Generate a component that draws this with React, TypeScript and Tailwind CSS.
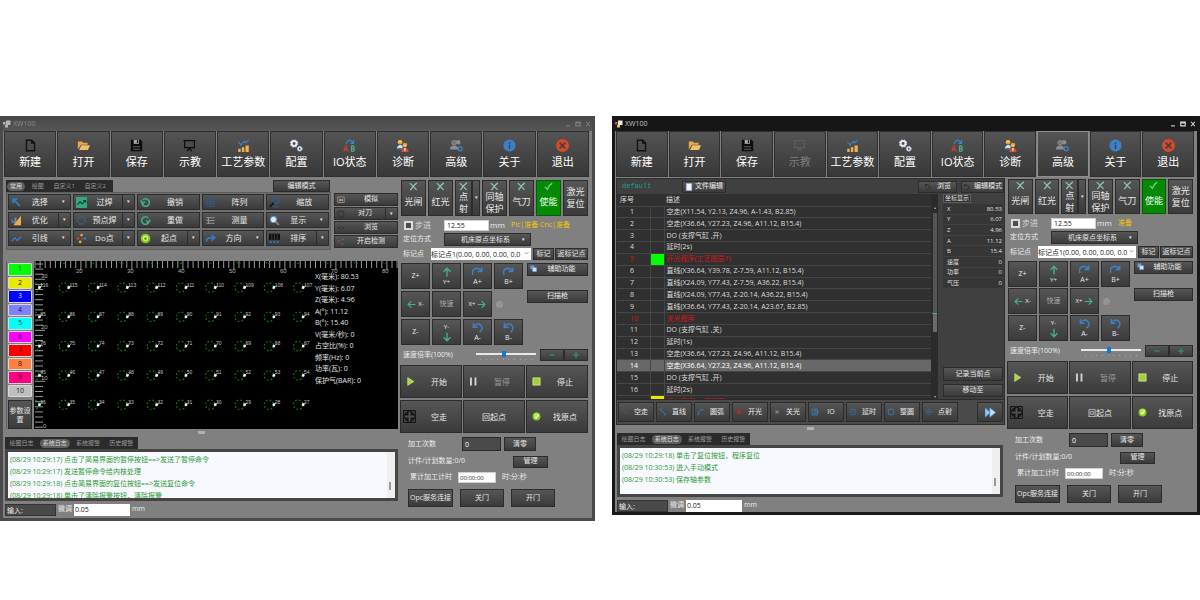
import type { ReactNode } from "react";
import { clsx } from "clsx";

const FACE =
  "bg-gradient-to-b from-[#565656] to-[#3b3b3b] border border-[#2c2c2c] text-[#e8e8e8]";

const icons: Record<string, ReactNode> = {
  file: <path d="M3 1.5h6.5L13 5v9.5H3zM9.5 1.5V5H13" fill="none" stroke="#111" strokeWidth="1.7" />,
  folder: (
    <>
      <path d="M1 13V3h5l1.500 1.500H13V7H5z" fill="#e9a94a" />
      <path d="M5.500 7.800H16L13.500 13.500H2.500z" fill="#f5bd6a" />
    </>
  ),
  save: (
    <>
      <path d="M1 1h12l2 2v12H1z" fill="#0c0c0c" />
      <path d="M4.500 1h6.500v5H4.500z" fill="#a5a5a5" />
      <path d="M8.500 1.500h1.500v3.500H8.500z" fill="#0c0c0c" />
      <path d="M3.500 9h9v1.200h-9zM3.500 12h9v1.200h-9z" fill="#5c5c5c" />
    </>
  ),
  board: (
    <path d="M0.500 2h15M2 2v8.500h12V2M8 10.500v2M8 11.500L5 15M8 11.500l3 3.500" fill="none" stroke="currentColor" strokeWidth="1.5" />
  ),
  chart: (
    <>
      <path d="M1.500 12h3v4h-3zM6 10h3v6H6zM10.500 8h4v8h-4z" fill="#f2b14c" />
      <path d="M1.500 3.500l3.500 3.500 4-4 2 1.500 3.500-3.500" fill="none" stroke="#3d7fc0" strokeWidth="1.500" />
      <circle cx="5" cy="7" r="1.300" fill="#3d7fc0" />
      <circle cx="9.500" cy="3.500" r="1.300" fill="#3d7fc0" />
    </>
  ),
  gears: (
    <>
      <circle cx="5" cy="5.500" r="3" fill="none" stroke="#e4ebf6" strokeWidth="2.400" />
      <circle cx="5" cy="5.500" r="4.400" fill="none" stroke="#d3deee" strokeWidth="1.400" strokeDasharray="1.800 1.700" />
      <circle cx="12" cy="12" r="2" fill="none" stroke="#e4ebf6" strokeWidth="1.700" />
      <circle cx="12" cy="12" r="3" fill="none" stroke="#d3deee" strokeWidth="1.200" strokeDasharray="1.300 1.100" />
    </>
  ),
  io: (
    <>
      <path d="M3.500 6Q8-2.500 12 4.500M13 1.500v4H9" fill="none" stroke="#3a86c8" strokeWidth="1.600" />
      <path d="M1 15.500L3.500 8.500 6 15.500M2 13h3" fill="none" stroke="#c9402e" strokeWidth="1.600" />
      <path d="M10.500 8.500v6.500h2.500q2-1.700 0-3.300h-2.500h2q2-1.700 0-3.200z" fill="none" stroke="#45b08c" strokeWidth="1.500" />
    </>
  ),
  workers: (
    <>
      <circle cx="5" cy="4" r="2.800" fill="#e8a33d" />
      <path d="M2 4q3-5 6 0z" fill="#f6d44b" />
      <path d="M1 12q1-6 7-4v4z" fill="#dfe3ea" />
      <path d="M2 11h5v2H2z" fill="#3b6fb8" />
      <circle cx="11" cy="7.500" r="2.600" fill="#f1c27d" />
      <path d="M8 7q3-5 6 0z" fill="#f39c1f" />
      <path d="M6.500 16q0-6 4.500-5.500T15.500 16z" fill="#c94f31" />
      <path d="M10 11h2v4h-2z" fill="#e6c9a0" />
    </>
  ),
  users: (
    <>
      <circle cx="10" cy="4" r="2.800" fill="#8d8d8d" />
      <circle cx="5" cy="4.500" r="2.900" fill="#777" stroke="#999" strokeWidth="0.700" />
      <path d="M0 13q0-5 5-5t5 5z" fill="#8d8d8d" />
      <circle cx="12.500" cy="12" r="2.400" fill="none" stroke="#3d7fc0" strokeWidth="1.700" />
    </>
  ),
  info: (
    <>
      <circle cx="8" cy="8" r="7.500" fill="#3f80c4" />
      <path d="M8 4v1.800M8 7v5" stroke="#1b4474" strokeWidth="1.700" />
    </>
  ),
  exit: (
    <>
      <circle cx="8" cy="8" r="8" fill="#d8482b" />
      <path d="M4.500 4.500l7 7M11.500 4.500l-7 7" stroke="#40403f" strokeWidth="2" />
    </>
  ),
  arrowUL: <path d="M3 9V3h6M3 3l10 10" fill="none" stroke="#2f7fd0" strokeWidth="2.400" />,
  weld: (
    <>
      <path d="M0 0h16v16H0z" fill="#35a77c" />
      <path d="M2 11l4-4 3 3 5-5M10.500 5H14v3.500" fill="none" stroke="#0e3d2c" strokeWidth="1.500" />
    </>
  ),
  undo: <path d="M3 10A5.500 5.500 0 1 0 4 4.500M1 5l2.500 5L7 6.500" fill="none" stroke="#3fb28a" strokeWidth="2.200" />,
  redo: <path d="M13 10A5.500 5.500 0 1 1 12 4.500M15 7l-3 4-3-3" fill="none" stroke="#3fb28a" strokeWidth="2.200" />,
  grid: <path d="M2 3h12M2 6.500h12M2 10h12M2 13.500h12M3 3v11M8 3v11M13 3v11" fill="none" stroke="#35588c" strokeWidth="1.200" />,
  list: <path d="M2 4h12M2 8h12M2 12h12M5 3v10" fill="none" stroke="#999" strokeWidth="1.400" />,
  zoomfit: (
    <>
      <circle cx="10" cy="5.500" r="4" fill="none" stroke="#2d5f92" strokeWidth="1.800" />
      <path d="M7 8.500L1 14.500" stroke="#14181f" strokeWidth="2.600" />
      <path d="M6 14h9" stroke="#2d5f92" strokeWidth="1.800" strokeDasharray="2 1" />
    </>
  ),
  search: (
    <>
      <path d="M9.500 9.500l5 5" stroke="#b97d35" strokeWidth="2.600" />
      <circle cx="6.500" cy="6.500" r="4.500" fill="#dcebff" stroke="#5b92d8" strokeWidth="1.600" />
    </>
  ),
  optimise: (
    <>
      <path d="M1 8h3v4H1z" fill="#c9402e" />
      <path d="M5 4h3v8H5z" fill="#3fb28a" />
      <path d="M14.500 1v14h-11z" fill="#f0a94d" />
      <path d="M0 6l4 5 3-3" fill="none" stroke="#3b86d0" strokeWidth="1.600" />
    </>
  ),
  ring: <circle cx="8" cy="8" r="5.500" fill="none" stroke="#3a6ea5" strokeWidth="2" strokeDasharray="2.600 2.200" />,
  polyline: <path d="M1 12l5-5 3 4 6-6" fill="none" stroke="#2f7fd0" strokeWidth="1.800" />,
  dots: (
    <>
      <circle cx="8" cy="3" r="2" fill="#f0a33a" />
      <circle cx="3" cy="8" r="1.800" fill="#d8482b" />
      <circle cx="13" cy="8" r="2" fill="#3d7fc0" />
      <circle cx="6" cy="13" r="2" fill="#f0a33a" />
      <circle cx="9" cy="8.500" r="1.300" fill="#d8482b" />
    </>
  ),
  check: (
    <>
      <circle cx="8" cy="8" r="7" fill="#8ccc1e" />
      <circle cx="8" cy="6" r="4.500" fill="#b8e44c" />
      <path d="M5 8.500l2.500 2.500L11.500 5" fill="none" stroke="#fff" strokeWidth="2" />
    </>
  ),
  start: (
    <>
      <circle cx="8" cy="8" r="7" fill="#86c81c" />
      <circle cx="8" cy="7.500" r="4" fill="#d9f39a" />
      <circle cx="8" cy="8" r="2" fill="#5f9a10" />
    </>
  ),
  turn: <path d="M2 13q0-6 6-6h5M9.500 3L14 7l-4.500 4" fill="none" stroke="#2f7fd0" strokeWidth="2.200" />,
  sort: (
    <>
      <path d="M0 1h16v9H0z" fill="#111" />
      <path d="M4 1v9M8 1v9M12 1v9" stroke="#4a4a4a" />
      <path d="M1 13h3M6 13h3M11 13h3" stroke="#2f6fb5" strokeWidth="3" />
    </>
  ),
  sim: (
    <>
      <path d="M1.500 2h13v11h-13z" fill="#394d6e" stroke="#d99a45" strokeWidth="1.500" />
      <path d="M4 8h8" stroke="#d8e3f5" strokeWidth="2" />
    </>
  ),
  frame: <path d="M2.500 2.500h11v11h-11z" fill="none" stroke="#303030" strokeWidth="1.600" />,
  reset: <path d="M3 3l4 1M3 3v4M3 4q8-2 9 4t-7 5" fill="none" stroke="#2a2a2a" strokeWidth="1.600" />,
  eye: (
    <>
      <path d="M1 8q7-7 14 0q-7 7-14 0z" fill="#333" />
      <circle cx="8" cy="8" r="2" fill="#555" />
    </>
  ),
  sensor: (
    <>
      <path d="M2 5h5M2 9h3" stroke="#c9402e" strokeWidth="2" strokeDasharray="2 1" />
      <path d="M8 12h5M10 4l4-2" stroke="#2f7fd0" strokeWidth="2" />
    </>
  ),
  cross: <path d="M1.500 2q5 5 12 12M14 1.500Q7 6 2.500 14.500" fill="none" stroke="#8fc0ab" strokeWidth="2.400" />,
  tick: <path d="M1.500 8.500L6 13Q8 6 14.500 2" fill="none" stroke="#6fce8c" strokeWidth="2.400" />,
  up: <path d="M8 15V2M2.500 7.500L8 2l5.500 5.500" fill="none" stroke="#45b08c" strokeWidth="2.200" />,
  down: <path d="M8 1v13M2.500 8.500L8 14l5.500-5.500" fill="none" stroke="#45b08c" strokeWidth="2.200" />,
  left: <path d="M15 8H2M7.500 2.500L2 8l5.500 5.500" fill="none" stroke="#45b08c" strokeWidth="2.200" />,
  right: <path d="M1 8h13M8.500 2.500L14 8l-5.500 5.500" fill="none" stroke="#45b08c" strokeWidth="2.200" />,
  cw: <path d="M1.500 13A6 6 0 0 1 12.500 6.500M14 2v6H8" fill="none" stroke="#3f7fc4" strokeWidth="2.400" />,
  ccw: <path d="M11 14.500A6 6 0 1 0 3 6.500M2 1.500v6h6" fill="none" stroke="#3f7fc4" strokeWidth="2.200" />,
  copy: (
    <>
      <path d="M1 1h9v9H1z" fill="#5ea2dc" />
      <path d="M6 6h9v9H6z" fill="#cfe5f8" stroke="#5ea2dc" />
    </>
  ),
  play: <path d="M3 1l11 7-11 7z" fill="#a8d53a" stroke="#d9ee9c" />,
  pause: <path d="M3.500 1v14M11.500 1v14" stroke="#cfcfcf" strokeWidth="3.400" />,
  stop: <path d="M1.500 1.500h13v13h-13z" fill="#a4cf3c" stroke="#dcefA6" strokeWidth="1.200" />,
  move: (
    <>
      <rect width="16" height="16" rx="1.500" fill="#171717" />
      <path d="M8 2v12M2 8h12" stroke="#4f4f4f" strokeWidth="2.400" />
      <path d="M2 2h3M2 2v3M14 2h-3M14 2v3M2 14h3M2 14v-3M14 14h-3M14 14v-3" stroke="#4a4a4a" strokeWidth="1.400" />
    </>
  ),
  minus: <path d="M3 8h10" stroke="#2f9a63" strokeWidth="2.200" />,
  plus: <path d="M2 8h12M8 2v12" stroke="#2f9a63" strokeWidth="2.400" />,
  page: <path d="M2.500 1h11v14h-11z" fill="#eef3fd" stroke="#9db7e6" />,
  line1: <path d="M1 2l12 11" stroke="#37618f" strokeWidth="1.800" />,
  line2: <path d="M2 2l11 11M1 4l3-3M11 15l3-3" stroke="#3a7dc0" strokeWidth="2" />,
  arc: <path d="M3 14Q2 3 13 3" fill="none" stroke="#3a7dc0" strokeWidth="1.800" />,
  laserOn: <path d="M8 3v10M3 8h10M4.500 4.500l7 7M11.500 4.500l-7 7" stroke="#d02626" strokeWidth="1.600" />,
  laserOff: <path d="M8 4v8M4 8h8M5 5l6 6M11 5l-6 6" stroke="#8b8b8b" strokeWidth="1.400" />,
  ports: <path d="M2 2h11v12H2zM5 5h6M5 8h4M5 11h6M9 7h5v4" fill="none" stroke="#3a7dc0" strokeWidth="1.700" />,
  clock: <path d="M14 8A6 6 0 1 1 8 2a6 6 0 0 1 6 6M8 4.500V8h3" fill="none" stroke="#3a6ea5" strokeWidth="1.600" />,
  circle: <circle cx="8" cy="8" r="6" fill="none" stroke="#3a7dc0" strokeWidth="1.800" />,
  target: <path d="M8 2l6 6-6 6-6-6zM8 6v4M6 8h4" fill="none" stroke="#3a6ea5" strokeWidth="1.600" />,
  forward: (
    <>
      <path d="M0 1l8 7-8 7z" fill="#8cc6f5" stroke="#4c8fd4" />
      <path d="M7 1l8.500 7L7 15z" fill="#bfe0fa" stroke="#4c8fd4" />
    </>
  ),
  app: (
    <>
      <path d="M6 1h9v9H6z" fill="currentColor" />
      <path d="M0 4h5v5H0z" fill="#d1572c" />
      <path d="M4 10h6v5H4z" fill="#eec064" />
    </>
  ),
  appOff: <path d="M6 1h9v9H6zM0 4h5v5H0zM4 10h6v5H4z" fill="currentColor" />,
};

function Icon({ name, className = "size-2" }: { name: string; className?: string }) {
  return (
    <svg viewBox="0 0 16 16" className={clsx("shrink-0", className)} aria-hidden="true">
      {icons[name]}
    </svg>
  );
}

function Btn({ children, className }: { children: ReactNode; className?: string }) {
  return (
    <button type="button" className={clsx(FACE, "flex items-center justify-center overflow-hidden whitespace-nowrap", className)}>
      {children}
    </button>
  );
}

const menu = [
  ["新建", "file"],
  ["打开", "folder"],
  ["保存", "save"],
  ["示教", "board"],
  ["工艺参数", "chart"],
  ["配置", "gears"],
  ["IO状态", "io"],
  ["诊断", "workers"],
  ["高级", "users"],
  ["关于", "info"],
  ["退出", "exit"],
];

function MainMenu({ teaching }: { teaching?: boolean }) {
  return (
    <nav className="flex h-[46px] gap-px bg-[#808080] pr-[3px] pl-px">
      {menu.map(([label, icon]) => (
        <button
          key={label}
          type="button"
          className={clsx(
            "flex flex-1 flex-col items-center gap-[2px] border border-[#303030] bg-gradient-to-b from-[#545454] to-[#383838] pt-[7px] text-[11px] leading-[16px] whitespace-nowrap",
            teaching && label === "示教" ? "text-[#7d7d7d]" : "text-white",
            teaching && label === "高级" && "border-[#8f8f8f]!",
          )}
        >
          <span className={teaching && label === "示教" ? "text-[#5c5c5c]" : "text-[#0c0c0c]"}>
            <Icon name={icon} className="size-[13px]" />
          </span>
          {label}
        </button>
      ))}
    </nav>
  );
}

function TitleBar({ active }: { active?: boolean }) {
  return (
    <header
      className={clsx(
        "flex h-[15px] items-center gap-[2px] text-[7px] leading-[9px]",
        active ? "bg-[#161616] text-[#c4c4c4]" : "bg-gradient-to-b from-[#484848] to-[#565656] text-[#8c8c8c]",
      )}
    >
      <span className={active ? "text-[#e8e8e8]" : "text-[#b4b4b4]"}>
        <Icon name={active ? "app" : "appOff"} />
      </span>
      <h1 className="flex-1">XW100</h1>
      <div className={clsx("flex gap-1 pr-px", active ? "text-[#d8d8d8]" : "text-[#7a7a7a]")}>
        {["M3 13h10", "M2 3h12v10H2zM2 5h12", "M3 2l10 12M13 2L3 14"].map((d, i) => (
          <button key={d} type="button" aria-label={["最小化", "最大化", "关闭"][i]}>
            <svg viewBox="0 0 16 16" className="size-[6px]">
              <path d={d} fill="none" stroke="currentColor" strokeWidth="3" />
            </svg>
          </button>
        ))}
      </div>
    </header>
  );
}

function LightButton({ icon, lines, split }: { icon?: string; lines: string[]; split?: boolean }) {
  const on = icon === "tick";
  return (
    <div className="flex flex-1">
      <button
        type="button"
        className={clsx(
          "flex flex-1 flex-col items-center border text-[9px] whitespace-nowrap",
          on ? "border-[#0a5a0a] bg-[#058a05] text-[#eaffea]" : FACE,
          lines.length > 1 ? "leading-[12px]" : "leading-[14px]",
          icon ? "justify-start pt-px" : "justify-center",
        )}
      >
        {icon && <Icon name={icon} className="size-[9px]" />}
        <span className={clsx("flex flex-col", lines.length === 1 && "mt-1")}>
          {lines.map((l) => (
            <span key={l}>{l}</span>
          ))}
        </span>
      </button>
      {split && (
        <button type="button" aria-label="点射选项" className={clsx(FACE, "w-2 text-[5px]")}>
          ▾
        </button>
      )}
    </div>
  );
}

function Jog({ children }: { children: ReactNode }) {
  return <Btn className="h-[26px] text-[7px] leading-[8px]">{children}</Btn>;
}

const stack = "flex flex-col items-center gap-px";

function ControlPanel({ id, compact, status }: { id: string; compact?: boolean; status: string }) {
  const white = "border border-[#d0d0d0] bg-white text-[#222]";
  return (
    <section
      className={clsx(
        "flex shrink-0 flex-col pr-[4px] text-[7px] text-[#ececec]",
        compact ? "w-[190px] pt-[2px]" : "w-[192px] pt-[3px]",
      )}
    >
      <div className={clsx("flex gap-[2px] pl-px", compact ? "h-[35px]" : "h-[36px]")}>
        <LightButton icon="cross" lines={["光闸"]} />
        <LightButton icon="cross" lines={["红光"]} />
        <LightButton icon="cross" lines={["点", "射"]} split />
        <LightButton icon="cross" lines={["同轴", "保护"]} />
        <LightButton icon="cross" lines={["气刀"]} />
        <LightButton icon="tick" lines={["使能"]} />
        <LightButton lines={["激光", "复位"]} />
      </div>

      <div className="mt-[3px] flex h-[12px] items-center pl-1">
        <label className="flex w-10 items-center gap-[2px] text-[8px] text-[#d8d8d8]">
          <input type="checkbox" className="size-[9px] appearance-none border-2 border-[#dcdcdc] bg-[#4c4c4c]" />
          步进
        </label>
        <input aria-label="步进距离" defaultValue="12.55" className={clsx(white, "h-[11px] w-[45px] px-[2px]")} />
        <span className="ml-px w-[21px] text-[8px]">mm</span>
        <span className="whitespace-nowrap text-[#f2c500]">{status}</span>
      </div>

      <div className="mt-px flex h-[14px] items-center pl-[3px]">
        <label htmlFor={`${id}-mode`} className="w-[41px]">
          定位方式
        </label>
        <div className="relative">
          <select id={`${id}-mode`} className={clsx(FACE, "h-[13px] w-[87px] appearance-none pr-1 text-center leading-[9px]")}>
            <option>机床原点坐标系</option>
          </select>
          <span className="pointer-events-none absolute top-0 right-[6px] text-[5px] leading-[13px]">▾</span>
        </div>
      </div>

      <div className="mt-[2px] flex h-[12px] items-center pl-[3px]">
        <label htmlFor={`${id}-mark`} className="w-7">
          标记点
        </label>
        <div className="relative flex-1">
          <select id={`${id}-mark`} className={clsx(white, "h-[12px] w-full appearance-none border-0! pr-2 leading-[9px]")}>
            <option>标记点1(0.00, 0.00, 0.00, 0.0</option>
          </select>
          <svg viewBox="0 0 8 8" className="pointer-events-none absolute top-[3px] right-[2px] size-[5px]">
            <path d="M1 2l3 3 3-3" fill="none" stroke="#666" />
          </svg>
        </div>
        <Btn className="ml-[2px] h-[12px] w-[21px]">标记</Btn>
        <Btn className="ml-px h-[12px] w-[33px]">返标记点</Btn>
      </div>

      <div className="mt-[3px] flex pl-px">
        <div className={clsx("grid w-[122px] grid-cols-4 gap-x-[2px]", compact ? "gap-y-px" : "gap-y-[2px]")}>
          <Jog>Z+</Jog>
          <Jog>
            <span className={clsx(stack, "text-[6px]")}>
              <Icon name="up" className="size-[10px]" />
              Y+
            </span>
          </Jog>
          <Jog>
            <span className={stack}>
              <Icon name="cw" className="size-[11px]" />
              A+
            </span>
          </Jog>
          <Jog>
            <span className={stack}>
              <Icon name="cw" className="size-[11px]" />
              B+
            </span>
          </Jog>
          <Jog>
            <span className="flex items-center gap-[2px] text-[6px]">
              <Icon name="left" className="size-[9px]" />
              X-
            </span>
          </Jog>
          <Jog>
            <span className="text-[#a8a8a8]">快速</span>
          </Jog>
          <Jog>
            <span className="flex items-center gap-[2px] text-[6px]">
              X+
              <Icon name="right" className="size-[9px]" />
            </span>
          </Jog>
          <div className="flex items-center pl-[2px]">
            <span className="size-[7px] rounded-full bg-[#959595]" />
          </div>
          <Jog>Z-</Jog>
          <Jog>
            <span className={clsx(stack, "text-[6px]")}>
              Y-
              <Icon name="down" className="size-[10px]" />
            </span>
          </Jog>
          <Jog>
            <span className={stack}>
              <Icon name="ccw" className="size-[11px]" />
              A-
            </span>
          </Jog>
          <Jog>
            <span className={stack}>
              <Icon name="ccw" className="size-[11px]" />
              B-
            </span>
          </Jog>
        </div>
        <div className="ml-1 flex flex-1 flex-col gap-[14px]">
          <Btn className="relative h-[13px] pl-2">
            <span className="absolute top-px left-[2px]">
              <Icon name="copy" className="size-[7px]" />
            </span>
            辅助功能
          </Btn>
          <Btn className="h-[13px]">扫描枪</Btn>
        </div>
      </div>

      <div className="mt-1 flex h-[12px] items-center pl-[3px]">
        <label htmlFor={`${id}-speed`} className="flex-1 whitespace-nowrap">
          速度倍率(100%)
        </label>
        <div className="flex w-[60px] flex-col gap-[2px]">
          <input
            id={`${id}-speed`}
            type="range"
            defaultValue={46}
            className="h-[6px] w-full appearance-none bg-[linear-gradient(#e9e9e9,#e9e9e9)] bg-[length:100%_2px] bg-center bg-no-repeat [&::-webkit-slider-thumb]:h-[6px] [&::-webkit-slider-thumb]:w-[4px] [&::-webkit-slider-thumb]:appearance-none [&::-webkit-slider-thumb]:bg-[#0f78d4]"
          />
          <div className="flex justify-between px-1">
            {Array.from({ length: 10 }, (_, i) => (
              <span key={i} className="size-px bg-[#a8a8a8]" />
            ))}
          </div>
        </div>
        <button type="button" aria-label="减速" className={clsx(FACE, "ml-1 flex h-[12px] w-[24px] items-center justify-center")}>
          <Icon name="minus" />
        </button>
        <button type="button" aria-label="加速" className={clsx(FACE, "flex h-[12px] w-[24px] items-center justify-center")}>
          <Icon name="plus" />
        </button>
      </div>

      <div className="mt-1 grid grid-cols-3 gap-x-px gap-y-[2px]">
        {[
          ["开始", "play"],
          ["暂停", "pause"],
          ["停止", "stop"],
          ["空走", "move"],
          ["回起点", ""],
          ["找原点", "check"],
        ].map(([label, icon]) => (
          <button
            key={label}
            type="button"
            className={clsx(FACE, "flex h-[33px] items-center text-[8px]", label === "暂停" && "text-[#9a9a9a]!")}
          >
            {icon && (
              <span className={clsx("flex w-[16px]", icon === "move" ? "pl-[2px]" : "pl-[5px]")}>
                <Icon name={icon} className={icon === "move" ? "size-[13px]" : "size-[9px]"} />
              </span>
            )}
            <span className="flex-1 text-center">{label}</span>
          </button>
        ))}
      </div>

      <div className="mt-1 flex h-[14px] items-center pl-2">
        <label htmlFor={`${id}-runs`} className="w-[54px]">
          加工次数
        </label>
        <input id={`${id}-runs`} defaultValue="0" className="h-[14px] w-[39px] border border-[#2c2c2c] bg-[#4a4a4a] px-[2px] text-white" />
        <Btn className="ml-[3px] h-[14px] w-[32px]">清零</Btn>
      </div>
      <div className="mt-1 flex h-[13px] items-center pl-2">
        <span className="w-[105px]">计件/计划数量:0/0</span>
        <Btn className="h-[12px] w-[35px]">管理</Btn>
      </div>
      <div className="mt-1 flex h-[11px] items-center pl-[10px]">
        <label htmlFor={`${id}-time`} className="w-[48px] whitespace-nowrap">
          累计加工计时
        </label>
        <input id={`${id}-time`} defaultValue="00:00:00" className={clsx(white, "h-[11px] w-[38px] px-px text-[6px]")} />
        <span className="ml-[6px]">时:分:秒</span>
      </div>
      <div className="mt-[6px] flex h-[18px] gap-[7px] pl-2">
        <Btn className="w-[45px]">Opc服务连接</Btn>
        <Btn className="w-[44px]">关门</Btn>
        <Btn className="w-[44px]">开门</Btn>
      </div>
    </section>
  );
}

function LogPanel({ lines }: { lines: string[] }) {
  return (
    <>
      <div className="mx-auto mt-[2px] h-[3px] w-[7px] bg-[#b0b0b0]" />
      <div className="mt-[3px] ml-[2px] flex h-[12px] w-[133px] items-center justify-around bg-[#2b2b2b] text-[6px] text-[#9c9c9c]">
        {["绘图日志", "系统日志", "系统报警", "历史报警"].map((t) => (
          <button
            key={t}
            type="button"
            className={clsx("h-[9px] rounded-full px-[3px] leading-[9px]", t === "系统日志" && "bg-[#5f5f5f] text-[#dedede]")}
          >
            {t}
          </button>
        ))}
      </div>
      <div className="mr-[2px] ml-[2px] h-[52px] border-3 border-[#454545] bg-white">
        <div className="relative h-full overflow-hidden bg-[#f8f8ff] pt-[2px] pl-[2px] text-[7px] leading-[12px] text-[#2c9a34]">
          {lines.map((l) => (
            <p key={l} className="whitespace-nowrap">
              {l}
            </p>
          ))}
          <span className="absolute right-0 bottom-0 h-full w-[8px] bg-[#efefef]" />
          <span className="absolute right-[4px] bottom-[8px] h-[8px] w-[2px] bg-[#9a9a9a]" />
        </div>
      </div>
    </>
  );
}

function CommandBar() {
  return (
    <div className="mt-[2px] flex h-[13px] items-center pl-[2px] text-[7px] text-[#ededed]">
      <input aria-label="输入" defaultValue="输入:" className="h-[12px] w-[51px] border border-[#333] bg-[#4a4a4a] px-px text-[#ededed]" />
      <label className="ml-[2px] flex items-center gap-[2px]">
        微调
        <input defaultValue="0.05" className="h-[12px] w-[56px] bg-white px-px text-[#222]" />
      </label>
      <span className="ml-[2px]">mm</span>
    </div>
  );
}

const tools = [
  ["选择", "arrowUL", "open"],
  ["过焊", "weld", "split"],
  ["撤销", "undo", ""],
  ["阵列", "grid", ""],
  ["缩放", "zoomfit", ""],
  ["优化", "optimise", "split"],
  ["预点焊", "ring", "split"],
  ["重做", "redo", ""],
  ["测量", "list", ""],
  ["显示", "search", "open"],
  ["引线", "polyline", "open"],
  ["Do点", "dots", "split"],
  ["起点", "start", "split"],
  ["方向", "turn", "open"],
  ["排序", "sort", "split"],
];

const layers = [
  "bg-[#00ff00] text-[#222]",
  "bg-[#e8e800] text-[#222]",
  "bg-[#0000ff] text-[#d8d8ff]",
  "bg-[#8080ff] text-[#222]",
  "bg-[#00ffff] text-[#222]",
  "bg-[#ff00ff] text-[#222]",
  "bg-[#ff0000] text-[#222]",
  "bg-[#ff8040] text-[#222]",
  "bg-[#ff0080] text-[#222]",
  "bg-[#c0c0c0] text-[#222]",
];

const pointRows = [
  [116, -1],
  [85, 1],
  [76, -1],
  [45, 1],
  [36, -1],
];

const readings = [
  "X(毫米): 80.53",
  "Y(毫米): 6.07",
  "Z(毫米): 4.96",
  "A(°): 11.12",
  "B(°): 15.40",
  "V(毫米/秒): 0",
  "占空比(%): 0",
  "频率(Hz): 0",
  "功率(瓦): 0",
  "保护气(BAR): 0",
];

function WeldCanvas() {
  return (
    <div className="relative h-[168px] flex-1 overflow-hidden bg-black">
      <svg width="364" height="168" viewBox="0 0 364 168">
        {Array.from({ length: 72 }, (_, i) => {
          const x = 1 + i * 5.1;
          return <path key={i} d={`M${x} 0v${i % 10 === 9 ? 9 : 7}`} stroke="#9a9a9a" strokeWidth="1" />;
        })}
        {Array.from({ length: 33 }, (_, i) => (
          <path key={i} d={`M1 ${3 + i * 5.1}h${(i + 7) % 10 === 0 ? 10 : 8}`} stroke="#9a9a9a" strokeWidth="1" />
        ))}
        <g fill="#b4b4b4" fontSize="6" fontFamily="Liberation Sans, sans-serif">
          {[20, 30, 40, 50, 60, 70, 80].map((n, i) => (
            <text key={n} x={42 + i * 51} y="12">
              {n}
            </text>
          ))}
          {[30, 20, 10, 0].map((n, i) => (
            <text key={n} x={n ? 7 : 9} y={n ? 17 + i * 51 : 167}>
              {n}
            </text>
          ))}
        </g>
        {Array.from({ length: 13 }, (_, c) => (
          <path key={c} d={`M${-3 + c * 29.3} 1q2 2 5 1`} fill="none" stroke="#0a8a0a" strokeDasharray="2 1" />
        ))}
        {pointRows.map(([first, step], r) =>
          Array.from({ length: 10 }, (_, c) => {
            const x = 5.5 + c * 29.3;
            const y = 26.5 + r * 29.3;
            return (
              <g key={`${r}-${c}`}>
                <circle cx={x - 5} cy={y} r="4.700" fill="none" stroke="#0b7d0b" strokeWidth="1.200" strokeDasharray="1.800 1.900" />
                <path d={`M${x - 1.5} ${y + 1.5}L${x + 2.5} ${y - 2.5}`} stroke="#aaa" strokeWidth="0.700" />
                <circle cx={x} cy={y} r="1.400" fill="#fff" />
                <text x={x + 0.8} y={y - 1} fontSize="5" fill="#c4c4c4" fontFamily="Liberation Sans, sans-serif">
                  {first + step * c}
                </text>
              </g>
            );
          }),
        )}
      </svg>
      <ul className="absolute top-[11px] left-[281px] text-[7px] leading-[10px] text-[#e4e4e4]">
        {readings.map((r, i) => (
          <li key={r} className={clsx("whitespace-nowrap", i % 2 ? "pb-px" : "pb-[2px]")}>
            {r}
          </li>
        ))}
      </ul>
    </div>
  );
}

function DrawingPane() {
  return (
    <section className="flex min-w-0 flex-1 flex-col">
      <div className="flex pt-[3px] pr-[2px] pl-[3px]">
        <div className="w-[325px]">
          <div className="flex items-start justify-between">
            <div className="flex h-[12px] w-[107px] items-center justify-between bg-[#2b2b2b] px-px pr-1 text-[6px] text-[#9c9c9c]">
              {["常用", "绘图", "自定义1", "自定义2"].map((t, i) => (
                <button
                  key={t}
                  type="button"
                  className={clsx("h-[9px] rounded-full px-[3px] leading-[9px]", i === 0 && "bg-[#5f5f5f] text-[#dedede]")}
                >
                  {t}
                </button>
              ))}
            </div>
            <Btn className="mr-[1px] h-[12px] w-[57px] text-[7px]">编辑模式</Btn>
          </div>
          <div className="grid grid-cols-5 gap-x-[2px] gap-y-[2px] border border-[#5e5e5e] bg-[#6f6f6f] p-px pb-[3px] text-[8px]">
            {tools.map(([label, icon, drop]) => (
              <div key={label} className={clsx(FACE, "flex h-[16px] items-center")}>
                <button type="button" className="flex min-w-0 flex-1 items-center pl-[2px]">
                  <Icon name={icon} className="size-[11px]" />
                  <span className="flex-1 text-center whitespace-nowrap">{label}</span>
                </button>
                {drop && (
                  <button
                    type="button"
                    aria-label={`${label}选项`}
                    className={clsx("h-full w-3 text-[5px]", drop === "split" && "border-l border-[#2c2c2c]")}
                  >
                    ▾
                  </button>
                )}
              </div>
            ))}
          </div>
        </div>
        <div className="ml-[3px] flex flex-1 flex-col gap-px pt-[13px] text-[7px]">
          {[
            ["模拟", "sim"],
            ["对刀", "frame"],
            ["浏览", "eye"],
            ["开启检测", "sensor"],
          ].map(([label, icon]) => (
            <div key={label} className={clsx(FACE, "flex h-[13px] items-center")}>
              <button type="button" className="flex flex-1 items-center pl-[2px]">
                <Icon name={icon} />
                <span className="flex-1 text-center">{label}</span>
              </button>
              {label === "对刀" && (
                <button type="button" aria-label="对刀选项" className="h-full w-3 border-l border-[#2c2c2c] text-[5px] leading-[9px]">
                  ▾
                </button>
              )}
            </div>
          ))}
        </div>
      </div>

      <div className="mt-[11px] flex pr-[2px] pl-[3px]">
        <div className="mr-[2px] flex w-[26px] flex-col border-l border-[#5e5e5e] pt-[2px] pl-px text-[7px]">
          <div className="flex h-[134px] flex-col gap-px">
            {layers.map((colour, i) => (
              <button key={colour} type="button" className={clsx("flex-1 rounded-[1px] border border-[#dadada] leading-[10px]", colour)}>
                {i + 1}
              </button>
            ))}
          </div>
          <button type="button" className={clsx(FACE, "mt-[3px] h-[29px] leading-[9px]")}>
            参数设
            <br />置
          </button>
        </div>
        <WeldCanvas />
      </div>

      <LogPanel
        lines={[
          "(08/29 10:29:17) 点击了简易界面的暂停按钮==>发送了暂停命令",
          "(08/29 10:29:17) 发送暂停命令给内核处理",
          "(08/29 10:29:18) 点击简易界面的复位按钮==>发送复位命令",
          "(08/29 10:29:18) 单击了清除报警按钮，清除报警",
        ]}
      />
      <CommandBar />
    </section>
  );
}

const program = [
  "空走(X11.54, Y2.13, Z4.96, A-1.43, B2.85)",
  "空走(X36.64, Y27.23, Z4.96, A11.12, B15.4)",
  "DO (支撑气缸 ,开)",
  "延时(2s)",
  "开光程序(工艺图层1)",
  "直线(X36.64, Y39.78, Z-7.59, A11.12, B15.4)",
  "直线(X24.09, Y77.43, Z-7.59, A36.22, B15.4)",
  "直线(X24.09, Y77.43, Z-20.14, A36.22, B15.4)",
  "直线(X36.64, Y77.43, Z-20.14, A23.67, B2.85)",
  "关光程序",
  "DO (支撑气缸 ,关)",
  "延时(1s)",
  "空走(X36.64, Y27.23, Z4.96, A11.12, B15.4)",
  "空走(X36.64, Y27.23, Z4.96, A11.12, B15.4)",
  "DO (支撑气缸 ,开)",
  "延时(2s)",
  "开光程序(工艺图层2)",
];

const coords = [
  ["X", "80.53"],
  ["Y", "6.07"],
  ["Z", "4.96"],
  ["A", "11.12"],
  ["B", "15.4"],
  ["速度", "0"],
  ["功率", "0"],
  ["气压", "0"],
];

const commands = [
  ["空走", "line1"],
  ["直线", "line2"],
  ["圆弧", "arc"],
  ["开光", "laserOn"],
  ["关光", "laserOff"],
  ["IO", "ports"],
  ["延时", "clock"],
  ["整圆", "circle"],
  ["点射", "target"],
];

function TeachingPane() {
  return (
    <section className="flex min-w-0 flex-1 flex-col pr-[2px]">
      <div className="mt-px ml-px border border-[#2e2e2e] bg-[#404040]">
        <div className="flex h-[15px] items-center text-[7px]">
          <span className="w-[65px] pl-[5px] font-['Liberation_Mono',monospace] text-[7px] text-[#1f9e98]">default</span>
          <Btn className="h-[12px] w-[44px] gap-[2px]">
            <Icon name="page" />
            文件编辑
          </Btn>
          <Btn className="ml-auto h-[12px] w-[39px] gap-[5px]">
            <Icon name="reset" />
            浏览
          </Btn>
          <Btn className="ml-1 h-[12px] w-[43px] gap-[3px]">
            <Icon name="reset" />
            编辑模式
          </Btn>
        </div>

        <div className="flex h-[205px]">
          <div className="min-w-0 flex-1 overflow-hidden bg-[#303030]">
            <table className="h-[213px] w-full table-fixed border-collapse text-left text-[7px] leading-[10px] text-[#dcdcdc]">
              <thead>
                <tr className="h-[12px]">
                  <th className="w-[33px] p-0 pl-[3px] font-normal">序号</th>
                  <th className="w-[14px] p-0" />
                  <th className="p-0 pl-[2px] font-normal">描述</th>
                </tr>
              </thead>
              <tbody>
                {program.map((step, i) => (
                  <tr
                    key={i}
                    className={clsx(
                      "border-t border-[#454545]",
                      (i === 4 || i === 9 || i === 16) && "text-[#d01818]",
                      i === 13 && "bg-[#686868] text-white",
                    )}
                  >
                    <td className="border-r border-[#454545] p-0 pl-[13px]">{i + 1}</td>
                    <td className={clsx("border-r border-[#454545] p-0", i === 4 && "bg-[#00ff00]", i === 16 && "bg-[#e8e800]")} />
                    <td className="truncate p-0 pl-[2px]">{step}</td>
                  </tr>
                ))}
              </tbody>
            </table>
          </div>
          <div className="flex w-[7px] flex-col items-center bg-[#2b2b2b] pt-[12px] text-[4px] leading-[4px] text-[#aaa]">
            ▴
            <span className="mt-[3px] h-[100px] w-[4px] bg-[#555]" />
            <span className="h-px w-[5px] bg-[#45b08c]" />
            <span className="h-[18px] w-[4px] bg-[#6a6a6a]" />
            <span className="mt-auto">▾</span>
          </div>
          <div className="ml-[3px] flex w-[63px] flex-col pr-px pl-[2px] text-[#e0e0e0]">
            <h2 className="w-[28px] border border-[#5a5a5a] bg-[#333] text-center text-[6px] leading-[7px] whitespace-nowrap">坐标显示</h2>
            <table className="mt-px h-[85px] w-full border-collapse bg-[#363636] text-[6px] leading-[8px]">
              <tbody>
                {coords.map(([k, v]) => (
                  <tr key={k} className="border-b border-[#414141]">
                    <th className="p-0 pl-[4px] text-left font-normal">{k}</th>
                    <td className="p-0 pr-px text-right">{v}</td>
                  </tr>
                ))}
              </tbody>
            </table>
            <Btn className="mt-auto h-[14px] text-[7px]">记录当前点</Btn>
            <Btn className="mt-[3px] mb-[2px] h-[13px] text-[7px]">移动至</Btn>
          </div>
        </div>

        <div className="flex h-[25px] items-center gap-[2px] border-t border-[#2a2a2a] bg-[#4a4a4a] px-px text-[7px]">
          {commands.map(([label, icon]) => (
            <Btn key={label} className="h-[20px] w-[36px] justify-start! pl-[2px]">
              <Icon name={icon} />
              <span className="flex-1 text-center">{label}</span>
            </Btn>
          ))}
          <button type="button" aria-label="继续" className={clsx(FACE, "ml-auto flex h-[20px] w-[26px] items-center justify-center")}>
            <Icon name="forward" className="size-[11px]" />
          </button>
        </div>
      </div>

      <LogPanel
        lines={[
          "(08/29 10:29:18) 单击了复位按钮，程序复位",
          "(08/29 10:30:53) 进入手动模式",
          "(08/29 10:30:53) 保存轴参数",
        ]}
      />
      <CommandBar />
    </section>
  );
}

export default function App() {
  return (
    <main className="grid min-h-screen grid-cols-[595fr_588fr] items-start gap-[17px] bg-white pt-29 font-['Open_Sans','Noto_Sans_CJK_SC',sans-serif]">
      <article className="border-3 border-t-0 border-[#4a4a4a] bg-[#808080]">
        <TitleBar />
        <MainMenu />
        <div className="flex pb-[2px]">
          <DrawingPane />
          <ControlPanel id="draw" status="Plc|准备 Cnc|准备" />
        </div>
      </article>
      <article className="border-3 border-t-0 border-[#181818] bg-[#808080]">
        <TitleBar active />
        <MainMenu teaching />
        <div className="flex">
          <TeachingPane />
          <ControlPanel id="teach" compact status="准备" />
        </div>
      </article>
    </main>
  );
}
